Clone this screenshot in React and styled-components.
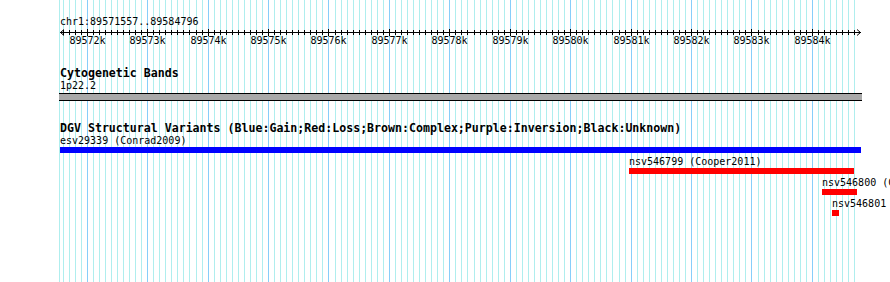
import styled, { createGlobalStyle } from 'styled-components';

const START = 89571557;
const END = 89584796;
const VIEW_LEFT = 60.5;
const VIEW_WIDTH = 800;
const TRACK_LEFT = 60;
const ppb = VIEW_WIDTH / (END - START);
const toX = (bp) => VIEW_LEFT + (bp - START) * ppb;
const snap = (bp) => Math.floor(toX(bp)) + 0.5;

const ticks = [];
for (let bp = 89571600; bp <= 89584700; bp += 100) {
  ticks.push({ bp, major: bp % 1000 === 0 });
}

const features = [
  { name: 'esv29339 (Conrad2009)', start: 89560000, end: 89600000, color: '#0000ff' },
  { name: 'nsv546799 (Cooper2011)', start: 89580965, end: 89584689, color: '#ff0000' },
  { name: 'nsv546800 (Cooper2011)', start: 89584159, end: 89584738, color: '#ff0000' },
  { name: 'nsv546801 (Cooper2011)', start: 89584324, end: 89584440, color: '#ff0000' },
];

const GlobalStyle = createGlobalStyle`
  html, body {
    margin: 0;
    padding: 0;
    background: #ffffff;
  }
  body {
    overflow: hidden;
  }
`;

const Page = styled.div`
  position: relative;
  width: 890px;
  height: 282px;
  overflow: hidden;
  background: #ffffff;
  font-family: "DejaVu Sans Mono", "Liberation Mono", monospace;
  font-size: 10px;
  color: #000;
`;

const GridLayer = styled.svg`
  position: absolute;
  left: 0;
  top: 0;
  z-index: 0;
`;

const Tracks = styled.div`
  position: relative;
  z-index: 1;
  display: flex;
  flex-direction: column;
  padding-left: ${TRACK_LEFT}px;
`;

const RulerBlock = styled.div`
  display: flex;
  flex-direction: column;
  margin-left: -${TRACK_LEFT}px;
  padding-top: 16px;
`;

const Location = styled.div`
  padding-left: ${TRACK_LEFT}px;
  line-height: 12px;
  white-space: nowrap;
`;

const RulerSvg = styled.svg`
  display: block;
  font-family: "DejaVu Sans Mono", "Liberation Mono", monospace;
  font-size: 10px;
`;

const Track = styled.section`
  display: flex;
  flex-direction: column;
  margin-top: ${(p) => p.$gap}px;
`;

const TrackTitle = styled.div`
  font-weight: bold;
  font-size: 11.6px;
  line-height: 14px;
  white-space: nowrap;
`;

const FeatureLabel = styled.div`
  line-height: 12px;
  white-space: nowrap;
`;

const Band = styled.div`
  margin-top: 1px;
  margin-left: -1px;
  width: 803px;
  height: 6px;
  background: #a9a9a9;
  border-top: 1px solid #000;
  border-bottom: 1px solid #000;
`;

const FeatureRow = styled.div`
  display: flex;
  flex-direction: column;
  align-items: flex-start;
  margin-bottom: 3px;
`;

const Bar = styled.div`
  height: 6px;
  background: ${(p) => p.$color};
`;

const Grid = () => (
  <GridLayer width="890" height="282">
    <line x1="59.5" x2="59.5" y1="0" y2="282" stroke="#afeeee" />
    {ticks.map((t) => (
      <line
        key={t.bp}
        x1={snap(t.bp)}
        x2={snap(t.bp)}
        y1="0"
        y2="282"
        stroke={t.major ? '#87cefa' : '#afeeee'}
      />
    ))}
  </GridLayer>
);

const Ruler = () => (
  <RulerSvg width="890" height="20">
    <line x1="60" x2="861" y1="4.5" y2="4.5" stroke="#000" />
    <polyline points="64,1.5 60.5,4.5 64,7.5" fill="none" stroke="#000" />
    <polyline points="857,1.5 860.5,4.5 857,7.5" fill="none" stroke="#000" />
    {ticks.map((t) => (
      <line
        key={t.bp}
        x1={snap(t.bp)}
        x2={snap(t.bp)}
        y1={t.major ? 1 : 2}
        y2={t.major ? 8 : 7}
        stroke="#000"
      />
    ))}
    {ticks
      .filter((t) => t.major)
      .map((t) => (
        <text key={t.bp} x={snap(t.bp)} y="16" textAnchor="middle" fill="#000">
          {`${t.bp / 1000}k`}
        </text>
      ))}
  </RulerSvg>
);

const Feature = ({ f }) => {
  const left = Math.round(Math.max(toX(f.start), TRACK_LEFT));
  const right = Math.round(Math.min(toX(f.end), 861));
  return (
    <FeatureRow style={{ marginLeft: left - TRACK_LEFT }}>
      <FeatureLabel>{f.name}</FeatureLabel>
      <Bar $color={f.color} style={{ width: right - left }} />
    </FeatureRow>
  );
};

export default function App() {
  return (
    <Page>
      <GlobalStyle />
      <Grid />
      <Tracks>
        <RulerBlock>
          <Location>chr1:89571557..89584796</Location>
          <Ruler />
        </RulerBlock>
        <Track $gap={18}>
          <TrackTitle>Cytogenetic Bands</TrackTitle>
          <FeatureLabel>1p22.2</FeatureLabel>
          <Band />
        </Track>
        <Track $gap={20}>
          <TrackTitle>
            DGV Structural Variants (Blue:Gain;Red:Loss;Brown:Complex;Purple:Inversion;Black:Unknown)
          </TrackTitle>
          {features.map((f) => (
            <Feature key={f.name} f={f} />
          ))}
        </Track>
      </Tracks>
    </Page>
  );
}
